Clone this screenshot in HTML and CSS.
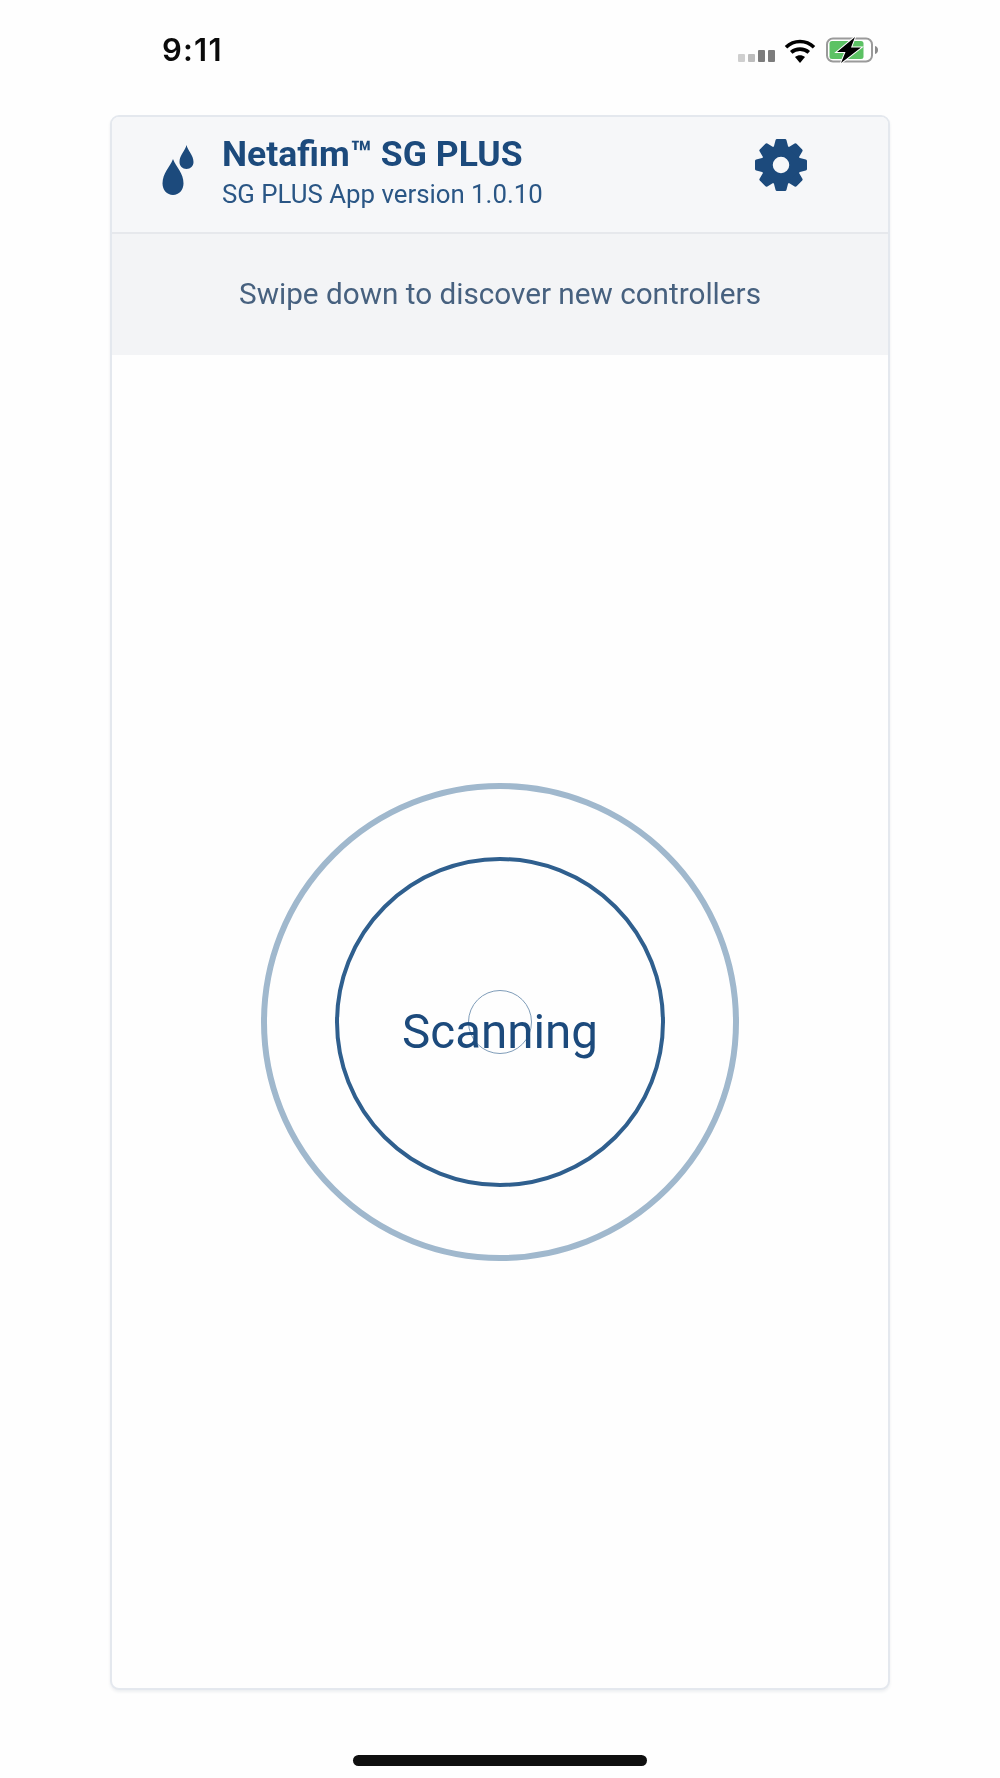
FILE: index.html
```html
<!DOCTYPE html>
<html lang="en">
<head>
<meta charset="utf-8">
<title>Netafim SG PLUS</title>
<link rel="stylesheet" href="styles.css">
</head>
<body>
<div class="screen">
  <div class="status">
    <span class="time">9:11</span>
    <div class="status-icons">
      <div class="signal">
        <i class="bar low"></i><i class="bar low dim"></i><i class="bar high"></i><i class="bar high"></i>
      </div>
      <svg class="wifi" viewBox="0 0 32 24" aria-hidden="true">
        <path d="M2 8.200C10 .6 22 .6 30 8.200" fill="none" stroke="#000" stroke-width="3.600"/>
        <path d="M7.200 13.400C12 9 20 9 24.800 13.400" fill="none" stroke="#000" stroke-width="3.600"/>
        <path d="M11 18C14 15.600 18 15.600 21 18L16 24Z" fill="#000"/>
      </svg>
      <svg class="battery" viewBox="0 0 53 26" aria-hidden="true">
        <rect x="1" y="1.500" width="45" height="23" rx="6" fill="#fff" stroke="#9a9a9a" stroke-width="2"/>
        <rect x="3.500" y="4" width="34" height="18" rx="2.500" fill="#5cc264"/>
        <path d="M49 9c2 .5 3 2 3 4s-1 3.500-3 4Z" fill="#8a8a8a"/>
        <path d="M29 0 11 15H19.500L15 26 35 10.500H25Z" fill="#000" stroke="#fff" stroke-width="2" paint-order="stroke"/>
      </svg>
    </div>
  </div>

  <main class="card">
    <header class="head">
      <svg class="drops" viewBox="0 0 32 52" aria-hidden="true">
        <path d="M11 14C8 22 .5 28 .5 38.500C.5 45 5 50 11 50S21.500 45 21.500 38.500C21.500 28 14 22 11 14Z"/>
        <path d="M24.500 0C23 6 17.500 10 17.500 17C17.500 21 20.500 24 24.500 24S31.500 21 31.500 17C31.500 10 26 6 24.500 0Z"/>
      </svg>
      <div class="titles">
        <div class="title">Netafim™ SG PLUS</div>
        <div class="subtitle">SG PLUS App version 1.0.10</div>
      </div>
      <svg class="gear" viewBox="-27 -27 54 54" aria-hidden="true">
        <circle r="14" fill="none" stroke="#1c4a7c" stroke-width="11.500"/>
        <g fill="#1c4a7c">
          <path id="tooth" d="M-7.500-17-5.500-24.800Q-5.200-26-4-26H4Q5.200-26 5.500-24.800L7.500-17Z"/>
          <use href="#tooth" transform="rotate(45)"/>
          <use href="#tooth" transform="rotate(90)"/>
          <use href="#tooth" transform="rotate(135)"/>
          <use href="#tooth" transform="rotate(180)"/>
          <use href="#tooth" transform="rotate(225)"/>
          <use href="#tooth" transform="rotate(270)"/>
          <use href="#tooth" transform="rotate(315)"/>
        </g>
      </svg>
    </header>
    <div class="notice">Swipe down to discover new controllers</div>
    <section class="stage">
      <div class="rings">
        <div class="ring outer"></div>
        <div class="ring inner"></div>
        <div class="ring core"></div>
        <div class="label">Scanning</div>
      </div>
    </section>
  </main>

  <div class="home"><div class="home-bar"></div></div>
</div>
</body>
</html>
```

FILE: styles.css
```css
* { box-sizing: border-box; }

html, body {
  margin: 0;
  background: #fefefe;
}

.screen {
  width: 1000px;
  height: 1778px;
  display: flex;
  flex-direction: column;
  font-family: Roboto, "Liberation Sans", sans-serif;
  overflow: hidden;
  filter: blur(0.4px);
}

/* status bar */
.status {
  height: 115px;
  flex: none;
  display: flex;
  justify-content: space-between;
  align-items: flex-start;
  padding: 32px 121px 0 162px;
}

.time {
  font-family: Inter, "Liberation Sans", sans-serif;
  font-weight: 600;
  font-size: 31px;
  line-height: 36px;
  color: #0a0a0a;
  letter-spacing: 1.2px;
}

.status-icons {
  display: flex;
  align-items: flex-end;
  gap: 9px;
  padding-top: 5px;
}

.signal {
  display: flex;
  align-items: flex-end;
  gap: 3px;
  padding-bottom: 1px;
}

.bar {
  display: block;
  width: 7px;
  border-radius: 1px;
}

.bar.low { height: 8px; background: #cfcfcf; }
.bar.low.dim { background: #bdbdbd; }
.bar.high { height: 12px; background: #7c7c7c; }

.wifi { width: 32px; height: 24px; display: block; }
.battery { width: 53px; height: 26px; display: block; margin-left: 1px; }

/* card */
.card {
  width: 780px;
  height: 1575px;
  flex: none;
  margin-left: 110px;
  display: flex;
  flex-direction: column;
  background: #fefefe;
  border: 2px solid #e4e8ee;
  border-radius: 9px;
  box-shadow: 0 2px 3px rgba(40, 60, 90, 0.08);
  overflow: hidden;
}

.head {
  height: 117px;
  flex: none;
  display: flex;
  align-items: center;
  background: #f6f7f9;
  border-bottom: 2px solid #e6e8ec;
  padding: 0 80px 19px 50px;
}

.drops {
  width: 32px;
  height: 52px;
  fill: #1c4a7c;
  flex: none;
  margin-top: 11px;
}

.titles {
  flex: 1;
  align-self: flex-start;
  margin-left: 28px;
  padding-top: 16px;
}

.title {
  font-weight: 700;
  font-size: 35.5px;
  line-height: 42px;
  color: #1c4a7c;
}

.subtitle {
  font-size: 25.8px;
  line-height: 30px;
  color: #2a5685;
  margin-top: 4px;
}

.gear {
  width: 54px;
  height: 54px;
  flex: none;
}

.notice {
  height: 121px;
  flex: none;
  background: #f3f4f6;
  display: flex;
  align-items: center;
  justify-content: center;
  font-size: 29.7px;
  color: #47617f;
  padding-bottom: 3px;
}

/* scanning rings */
.stage {
  flex: 1;
  display: flex;
  align-items: center;
  justify-content: center;
}

.rings {
  width: 478px;
  height: 478px;
  display: grid;
  place-items: center;
}

.ring, .label {
  grid-area: 1 / 1;
}

.ring { border-radius: 50%; }

.ring.outer {
  width: 478px;
  height: 478px;
  border: 6px solid #a0b8cd;
}

.ring.inner {
  width: 330px;
  height: 330px;
  border: 4.5px solid #2f5f8e;
}

.ring.core {
  width: 64px;
  height: 64px;
  border: 1px solid #7f9cb8;
}

.label {
  font-size: 47.5px;
  line-height: 56px;
  color: #1c4a7c;
  padding-top: 20px;
}

/* home indicator */
.home {
  flex: 1;
  display: flex;
  justify-content: center;
  padding-top: 65px;
}

.home-bar {
  width: 294px;
  height: 11px;
  border-radius: 6px;
  background: #0f0f0f;
}
```
